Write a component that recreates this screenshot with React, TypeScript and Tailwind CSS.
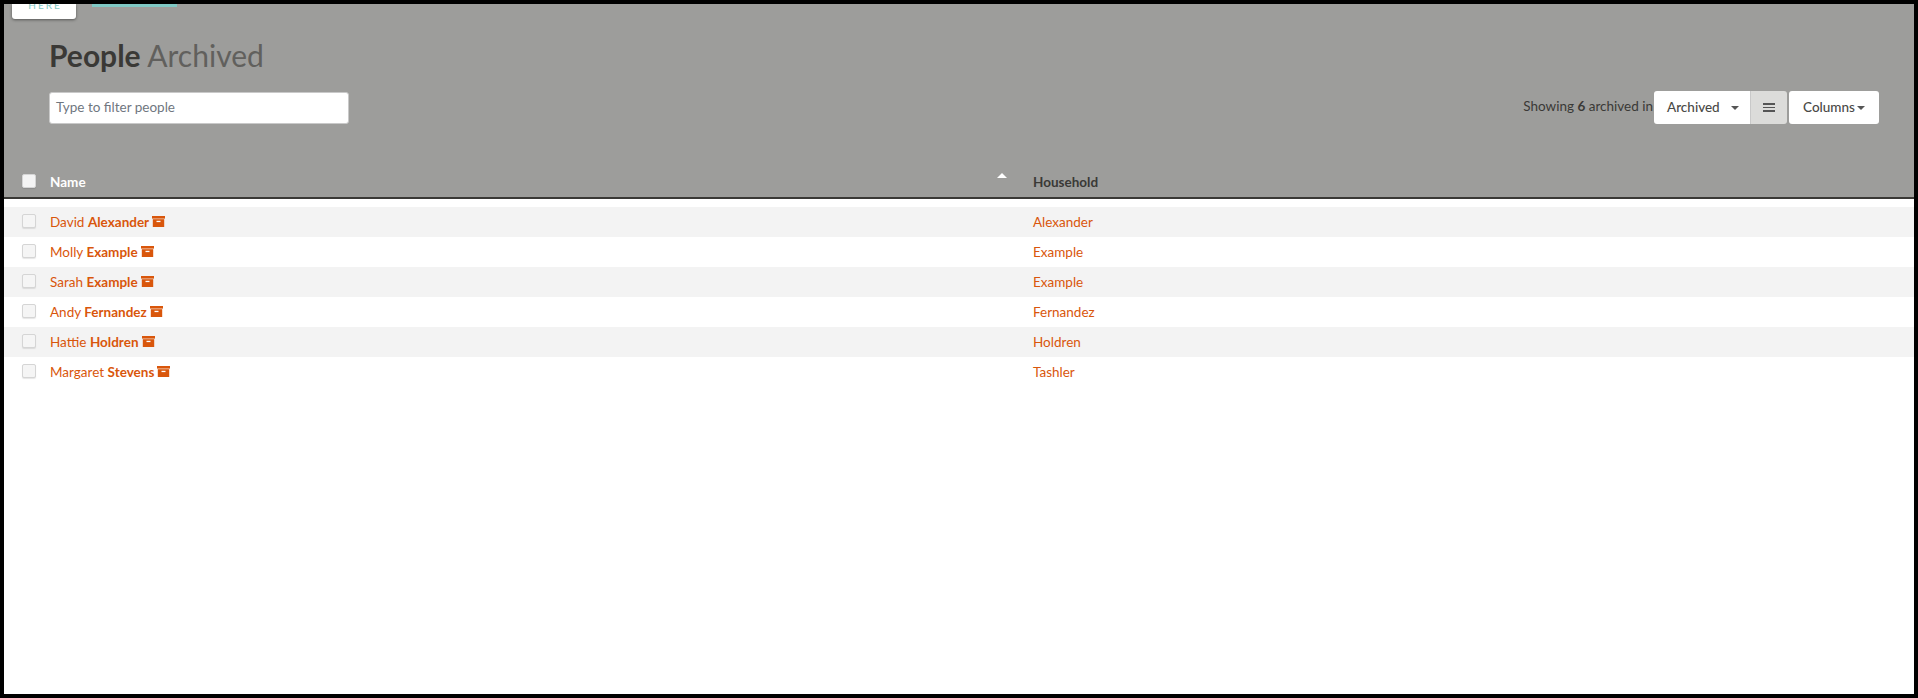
import { ComponentProps } from "react";
import { twMerge } from "tailwind-merge";

const people = [
    { first: "David", last: "Alexander", household: "Alexander" },
    { first: "Molly", last: "Example", household: "Example" },
    { first: "Sarah", last: "Example", household: "Example" },
    { first: "Andy", last: "Fernandez", household: "Fernandez" },
    { first: "Hattie", last: "Holdren", household: "Holdren" },
    { first: "Margaret", last: "Stevens", household: "Tashler" },
];

const Caret = ({ className, ...props }: ComponentProps<"span">) => (
    <span
        className={twMerge(
            "inline-block w-0 h-0 border-x-[4px] border-x-transparent border-t-[4px] border-t-[#555]",
            className,
        )}
        {...props}
    />
);

const ArchiveIcon = () => (
    <svg width="13" height="11" viewBox="0 0 13 11" className="ml-[3px] mt-[-2px] shrink-0">
        <rect x="0" y="0" width="13" height="2.6" fill="#d9560b" />
        <rect x="0.8" y="3.2" width="11.4" height="7.8" fill="#d9560b" />
        <rect x="4.5" y="4.8" width="4" height="1.3" fill="#fff" />
    </svg>
);

const CheckBox = ({ className }: { className?: string }) => (
    <div
        className={twMerge(
            "w-[14px] h-[14px] rounded-[2px] border border-[#d5d5d5] bg-[#f5f5f5] shadow-[0_1px_1px_rgba(0,0,0,0.1)] shrink-0 mt-[-2px]",
            className,
        )}
    />
);

const PersonRow = ({ person, striped }: { person: (typeof people)[number]; striped: boolean }) => (
    <div className={twMerge("flex items-center h-[30px] text-[13.5px] text-[#d9560b]", striped && "bg-[#f3f3f3]")}>
        <div className="w-[1029px] flex items-center pl-[18px] shrink-0">
            <CheckBox />
            <a className="ml-[14px]">
                {person.first} <span className="font-bold">{person.last}</span>
            </a>
            <ArchiveIcon />
        </div>
        <a>{person.household}</a>
    </div>
);

export default function App() {
    return (
        <div className="h-[698px] border-4 border-black bg-white overflow-hidden font-['Lato','Open_Sans',sans-serif]">
            <div className="h-[193px] bg-[#9d9d9b] flex flex-col border-b-[2px] border-[#3a3936] box-content">
                <div className="h-[15px] flex items-start pl-[8px] shrink-0">
                    <div className="w-[64px] h-[15px] bg-white rounded-b-[3px] shadow-[0_1px_3px_rgba(0,0,0,0.45)] overflow-hidden flex justify-center">
                        <span className="text-[10px] leading-none tracking-[2px] text-[#7fc8c4] mt-[-4px] ml-[2px]">HERE</span>
                    </div>
                    <div className="ml-[16px] w-[85px] h-[3px] bg-[#7fc8c4]" />
                </div>
                <h1 className="ml-[45px] mt-[18px] text-[30px] leading-[36px] text-[#61605d] font-normal">
                    <span className="font-bold text-[#3a3936]">People</span> Archived
                </h1>
                <div className="flex items-center justify-between mt-[18px] pl-[45px] pr-[35px]">
                    <div className="w-[300px] h-[32px] bg-white rounded-[3px] border border-[#c9c9c9] px-[6px] flex items-center text-[13.5px] text-[#6f7680]">
                        Type to filter people
                    </div>
                    <div className="flex items-center text-[13.5px] text-[#3a3936]">
                        <span className="mr-[1px] mt-[-2px]">
                            Showing <span className="font-bold">6</span> archived in
                        </span>
                        <div className="w-[96px] h-[33px] bg-white rounded-l-[3px] flex items-center pl-[13px] text-[#4a4946] font-medium">
                            Archived
                            <Caret className="ml-[11px]" />
                        </div>
                        <div className="w-[37px] h-[33px] bg-[#dcdcda] rounded-r-[3px] border-l border-[#c9c9c9] flex flex-col items-center justify-center gap-[2px]">
                            <span className="w-[12px] h-[1.5px] bg-[#555]" />
                            <span className="w-[12px] h-[1.5px] bg-[#555]" />
                            <span className="w-[12px] h-[1.5px] bg-[#555]" />
                        </div>
                        <div className="w-[90px] h-[33px] ml-[2px] bg-white rounded-[3px] flex items-center justify-center text-[#4a4946] font-medium">
                            Columns
                            <Caret className="ml-[2px]" />
                        </div>
                    </div>
                </div>
                <div className="flex items-center mt-[auto] h-[30px] text-[13.5px] font-bold">
                    <div className="w-[1029px] shrink-0 flex items-center pl-[18px] relative">
                        <CheckBox className="bg-[#f4f4f4]" />
                        <span className="ml-[14px] text-white">Name</span>
                        <span className="absolute left-[993px] top-[1px] w-0 h-0 border-x-[5px] border-x-transparent border-b-[5px] border-b-white" />
                    </div>
                    <span className="text-[#3a3936]">Household</span>
                </div>
            </div>
            <div className="pt-[8px]">
                {people.map((person, i) => (
                    <PersonRow key={i} person={person} striped={i % 2 === 0} />
                ))}
            </div>
        </div>
    );
}
